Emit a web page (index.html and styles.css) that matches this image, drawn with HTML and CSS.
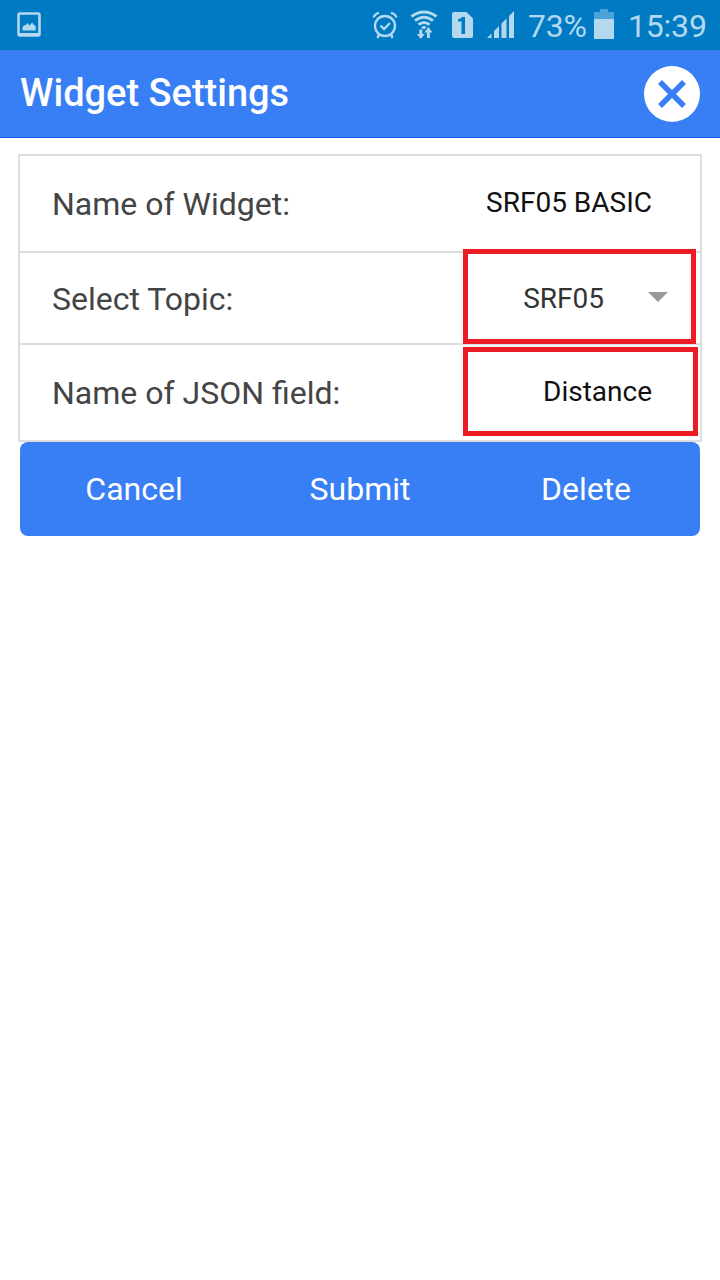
FILE: index.html
```html
<!DOCTYPE html>
<html lang="en">
<head>
<meta charset="utf-8">
<title>Widget Settings</title>
<link rel="stylesheet" href="styles.css">
</head>
<body>
<div class="status">
  <svg class="picture" width="26" height="28" viewBox="0 0 26 28"><rect x="2.500" y="2.500" width="21" height="22" rx="1.500" fill="none" stroke="currentColor" stroke-width="2.600"/><path d="M3 22h20v3H3zM6.500 19.500V16l2-2 1.200.5 1.500-2.500 2.300 2.500 2.700-3 1.500 2.500h1l1 2v3.500z" fill="currentColor"/></svg>
  <svg class="alarm" width="26" height="28" viewBox="0 0 26 28" fill="none" stroke="currentColor" stroke-width="2.300"><circle cx="13" cy="15" r="10"/><path d="M8.500 14.500l3.500 3.500 6-6M1.500 6.500q1.200-3.700 5.500-4.700M24.500 6.500q-1.200-3.700-5.500-4.700M7 23l-1.500 4M19 23l1.500 4"/></svg>
  <svg class="wifi" width="28" height="29" viewBox="0 0 28 29"><path d="M1.500 6.500q12.500-9 25 0M5 10.700q9-7 18 0M8.500 14.700q5.500-4.500 11 0" fill="none" stroke="currentColor" stroke-width="2.900"/><path d="M11 17.500q3-2.500 5.500-.5l-2.500 2.500zM9.300 19.500h3v4.500h2.500L10.800 29 6.800 24h2.500zM16.900 28v-5.500h-2.600l4.100-5.500 4.100 5.500h-2.600V28z" fill="currentColor"/></svg>
  <svg class="sim" width="21" height="27" viewBox="0 0 21 27"><path d="M2 0h12.500L21 6.500V24q0 2-2 2H2q-2 0-2-2V2q0-2 2-2z" fill="currentColor"/><path d="M6 9.500V7.300q3-.3 4-2.300h3v17H9.500V9.500z" fill="#007bc3"/></svg>
  <svg class="signal" width="28" height="28" viewBox="0 0 28 28" fill="currentColor"><path d="M0 27l4.500-4.500V27zM7 20l5-5v12H7zM14.500 12.500l5-5V27h-5zM22 5l5-5v27h-5z"/></svg>
  <span class="percent">73%</span>
  <svg class="battery" width="20" height="30" viewBox="0 0 20 30"><path d="M0 3h6V0h8v3h6v7H0z" fill="#4aa2d6"/><path d="M0 10h20v20H0z" fill="currentColor"/></svg>
  <span class="clock">15:39</span>
</div>
<header class="header">
  <h1 class="title">Widget Settings</h1>
  <button class="close" aria-label="Close"><svg width="56" height="56" viewBox="0 0 56 56"><circle cx="28" cy="28" r="28" fill="#fff"/><path d="M16 16l24 24M40 16l-24 24" stroke="#387ef5" stroke-width="5.600"/></svg></button>
</header>
<main class="content">
  <div class="list">
    <div class="row"><span class="label">Name of Widget:</span><span class="value name">SRF05 BASIC</span></div>
    <div class="row topic-row"><span class="label">Select Topic:</span><span class="value topic">SRF05</span><svg class="arrow" width="20" height="10" viewBox="0 0 20 10"><path d="M0 0h20L10 10z" fill="#999"/></svg><i class="mark mark-topic"></i></div>
    <div class="row"><span class="label">Name of JSON field:</span><span class="value field">Distance</span><i class="mark mark-field"></i></div>
  </div>
  <div class="buttons"><button>Cancel</button><button>Submit</button><button>Delete</button></div>
</main>
</body>
</html>
```
FILE: styles.css
```css
* { box-sizing: border-box; }
body { margin: 0; background: #fff; font-family: Roboto, sans-serif; color: #444; }
svg { display: block; flex: none; }
button { border: 0; padding: 0; background: none; color: #fff; font: inherit; }
.status { height: 50px; display: flex; align-items: flex-start; background: #007bc3; color: #b4d8ee; padding-left: 16px; }
.status span { font-size: 32px; line-height: 38px; letter-spacing: -0.2px; white-space: nowrap; }
.picture { margin-top: 11px; }
.alarm { margin: 11px 0 0 330px; }
.wifi { margin: 10px 0 0 12px; }
.sim { margin: 12px 0 0 14px; }
.signal { margin: 11px 0 0 14px; }
.status .percent { width: 60px; margin: 7px 0 0 13px; }
.battery { margin: 9px 0 0 6px; }
.status .clock { margin: 7px 0 0 14px; }
.header { height: 88px; display: flex; align-items: center; justify-content: space-between; padding: 0 20px; background: #387ef5; border-bottom: 1px solid #0c60ee; }
.title { margin: 0; padding-bottom: 2px; font-size: 38px; font-weight: 500; line-height: 44px; color: #fff; }
.content { padding: 16px 18px; }
.list { border: 2px solid #ddd; }
.row { position: relative; height: 97px; display: flex; align-items: center; padding: 2px 48px 0 32px; border-bottom: 2px solid #ddd; }
.topic-row { height: 92px; padding-right: 32px; }
.row:last-child { height: 95px; border-bottom: 0; }
.label { flex: 1; padding-bottom: 2px; font-size: 32px; line-height: 38px; }
.topic-row .label { padding-bottom: 0; }
.value { font-size: 28px; line-height: 34px; color: #111; padding-bottom: 4px; }
.topic { color: #333; padding-bottom: 0; margin-right: 44px; }
.arrow { margin-bottom: 4px; }
.mark { position: absolute; left: 443px; border: 5px solid #ed1c24; z-index: 1; }
.mark-topic { top: -4px; width: 233px; height: 95px; }
.mark-field { top: 2px; width: 235px; height: 89px; }
.buttons { height: 94px; margin: 0 2px; padding: 0 1px; display: flex; background: #387ef5; border-radius: 8px; }
.buttons button { flex: 1; font-size: 32px; }
```
